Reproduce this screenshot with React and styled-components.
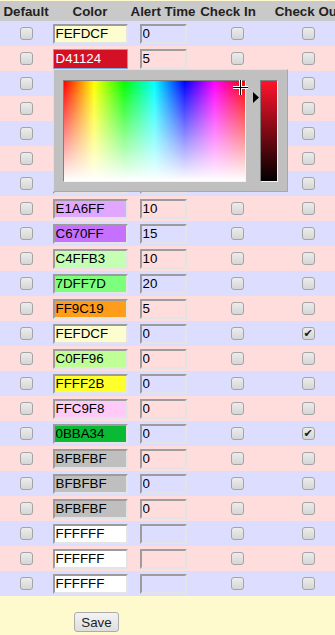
import React, { useEffect, useRef } from 'react';
import styled, { createGlobalStyle } from 'styled-components';

const GlobalStyle = createGlobalStyle`
  html, body {
    margin: 0;
    padding: 0;
    background: #fffacd;
    overflow: hidden;
  }
  body {
    font-family: "Liberation Sans", Arial, sans-serif;
  }
`;

const rows = [
  { color: 'FEFDCF', alert: '0' },
  { color: 'D41124', alert: '5', picker: true },
  { color: 'FFC9F8', alert: '0' },
  { color: 'C0FF96', alert: '5' },
  { color: 'FFFF2B', alert: '10' },
  { color: 'BFBFBF', alert: '0' },
  { color: 'FEFDCF', alert: '15' },
  { color: 'E1A6FF', alert: '10' },
  { color: 'C670FF', alert: '15' },
  { color: 'C4FFB3', alert: '10' },
  { color: '7DFF7D', alert: '20' },
  { color: 'FF9C19', alert: '5' },
  { color: 'FEFDCF', alert: '0', checkOut: true },
  { color: 'C0FF96', alert: '0' },
  { color: 'FFFF2B', alert: '0' },
  { color: 'FFC9F8', alert: '0' },
  { color: '0BBA34', alert: '0', checkOut: true },
  { color: 'BFBFBF', alert: '0' },
  { color: 'BFBFBF', alert: '0' },
  { color: 'BFBFBF', alert: '0' },
  { color: 'FFFFFF', alert: '' },
  { color: 'FFFFFF', alert: '' },
  { color: 'FFFFFF', alert: '' },
];

// white text on dark swatches, like jscolor does
const textFor = (hex) => {
  const r = parseInt(hex.slice(0, 2), 16) / 255;
  const g = parseInt(hex.slice(2, 4), 16) / 255;
  const b = parseInt(hex.slice(4, 6), 16) / 255;
  return 0.213 * r + 0.715 * g + 0.072 * b < 0.5 ? '#fff' : '#000';
};

const Table = styled.table`
  border-collapse: collapse;
  table-layout: fixed;
  width: 358px;
  margin-top: 1px;
`;

const Th = styled.th`
  height: 20px;
  padding: 0;
  background: #c9c9c9;
  color: #222;
  font-size: 13.33px;
  font-weight: bold;
  text-align: center;
  white-space: nowrap;
`;

const Row = styled.tr`
  background: ${(p) => (p.$alt ? '#ffdddd' : '#ddddff')};
`;

const Td = styled.td`
  height: 25px;
  padding: 0 0 0 ${(p) => p.$shift || 0}px;
  text-align: center;
  vertical-align: middle;
  position: relative;
`;

const Input = styled.input`
  display: block;
  margin: 0 auto;
  box-sizing: border-box;
  height: 20px;
  width: ${(p) => p.$w}px;
  padding: 0 1px;
  border: 2px solid;
  border-color: #9c9c9c #e4e4e4 #e4e4e4 #9c9c9c;
  background: ${(p) => p.$bg || 'transparent'};
  color: ${(p) => p.$fg || '#000'};
  font-family: "Liberation Sans", Arial, sans-serif;
  font-size: 13.33px;
  caret-color: #000;
  outline: none;
  &[data-active='true'] {
    border: 1px solid #7ba7dc;
    padding: 0 2px;
  }
`;

const Check = styled.input.attrs({ type: 'checkbox' })`
  appearance: none;
  display: block;
  margin: 0 auto;
  width: 13px;
  height: 13px;
  box-sizing: border-box;
  border: 1px solid #a4a4a4;
  border-radius: 3px;
  background: linear-gradient(#ececec, #d6d6d6);
  position: relative;
  &:checked::after {
    content: '✔';
    position: absolute;
    left: 1px;
    top: 0;
    font-size: 11px;
    line-height: 11px;
    font-weight: bold;
    color: #1e1e1e;
    font-family: "DejaVu Sans", sans-serif;
  }
`;

const Picker = styled.div`
  position: absolute;
  top: 23px;
  left: 1px;
  z-index: 5;
  display: flex;
  gap: 14px;
  padding: 10px 9px 9px 9px;
  background: #c0c0c0;
  border: 1px solid;
  border-color: #dedede #a8a8a8 #a8a8a8 #dedede;
`;

const Pad = styled.div`
  position: relative;
  width: 181px;
  height: 100px;
  border: 1px solid;
  border-color: #808080 #f4f4f4 #f4f4f4 #808080;
  background:
    linear-gradient(to bottom, rgba(255, 255, 255, 0), #fff),
    linear-gradient(to right, #f00, #ff0 16.6%, #0f0 33.3%, #0ff 50%, #00f 66.6%, #f0f 83.3%, #f00);
`;

const Cross = styled.svg`
  position: absolute;
  left: 169px;
  top: -1px;
`;

const Slider = styled.div`
  position: relative;
  width: 16px;
  height: 100px;
  border: 1px solid;
  border-color: #808080 #f4f4f4 #f4f4f4 #808080;
  background: linear-gradient(to bottom, #ff142b, #000);
`;

const Arrow = styled.svg`
  position: absolute;
  left: -8px;
  top: 11px;
`;

const Foot = styled.td`
  padding: 16px 0 3px 74px;
  text-align: left;
`;

const SaveButton = styled.button`
  width: 45px;
  height: 20px;
  padding: 0;
  border: 1px solid #acacac;
  border-radius: 3px;
  background: linear-gradient(#f3f3f3, #dedede);
  color: #222;
  font-family: "Liberation Sans", Arial, sans-serif;
  font-size: 13.33px;
`;

const ColorPicker = () => (
  <Picker>
    <Pad>
      <Cross width="15" height="15" viewBox="0 0 15 15">
        <path d="M7.5 0V15M0 7.5H15" stroke="#fff" strokeWidth="3" />
        <path d="M7.5 0V15M0 7.5H15" stroke="#000" strokeWidth="1" />
      </Cross>
    </Pad>
    <Slider>
      <Arrow width="6" height="11" viewBox="0 0 6 11">
        <polygon points="0,0 6,5.5 0,11" fill="#000" />
      </Arrow>
    </Slider>
  </Picker>
);

const App = () => {
  const activeRef = useRef(null);

  useEffect(() => {
    const el = activeRef.current;
    if (el) {
      el.focus();
      el.setSelectionRange(3, 3);
    }
  }, []);

  return (
    <>
      <GlobalStyle />
      <Table>
        <colgroup>
          <col style={{ width: 52 }} />
          <col style={{ width: 76 }} />
          <col style={{ width: 70 }} />
          <col style={{ width: 60 }} />
          <col style={{ width: 100 }} />
        </colgroup>
        <thead>
          <tr>
            <Th>Default</Th>
            <Th>Color</Th>
            <Th>Alert Time</Th>
            <Th>Check In</Th>
            <Th>Check Out</Th>
          </tr>
        </thead>
        <tbody>
          {rows.map((r, i) => (
            <Row key={i} $alt={i % 2 === 1}>
              <Td><Check /></Td>
              <Td>
                <Input
                  ref={r.picker ? activeRef : null}
                  data-active={r.picker ? 'true' : 'false'}
                  $w={75}
                  $bg={'#' + r.color}
                  $fg={textFor(r.color)}
                  defaultValue={r.color}
                />
                {r.picker && <ColorPicker />}
              </Td>
              <Td><Input $w={47} defaultValue={r.alert} /></Td>
              <Td $shift={18}><Check /></Td>
              <Td><Check defaultChecked={!!r.checkOut} /></Td>
            </Row>
          ))}
        </tbody>
        <tfoot>
          <tr>
            <Foot colSpan={5}>
              <SaveButton>Save</SaveButton>
            </Foot>
          </tr>
        </tfoot>
      </Table>
    </>
  );
};

export default App;
